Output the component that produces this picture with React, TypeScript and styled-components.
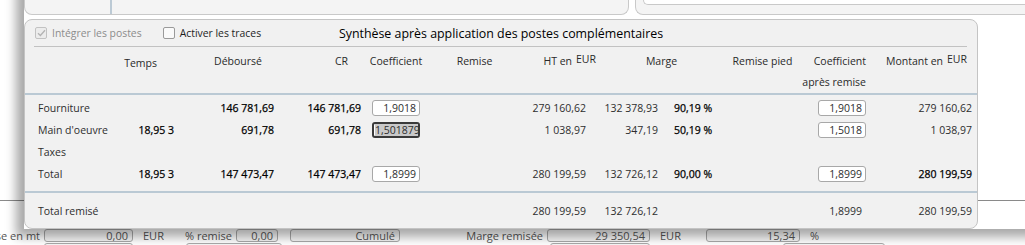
import React from "react";
import styled, { createGlobalStyle } from "styled-components";

const GlobalStyle = createGlobalStyle`
  html, body { margin: 0; padding: 0; background: #ffffff; }
  body {
    font-family: "Open Sans", "Noto Sans", sans-serif;
    color: #1e1e1e;
  }
`;

const COLS = "79px 72px 100px 87px 66px 91px 78px 62px 65px 75px 70px 1fr";

const Page = styled.div`
  position: relative;
  width: 1025px;
  height: 245px;
  overflow: hidden;
  background: #ffffff;
`;

/* ---------- background page ---------- */

const TopRow = styled.div`
  display: flex;
  gap: 6px;
  height: 15px;
  padding-left: 24px;
`;

const LeftCard = styled.div`
  width: 518px;
  display: flex;
  background: #f4f4f4;
  border: 1px solid #c9c9c9;
  border-top: none;
  border-radius: 0 0 8px 8px;
  padding-left: 85px;
`;

const CardDivider = styled.div`
  width: 2px;
  background: #bccad5;
`;

const RightCard = styled.div`
  flex: 1;
  background: #f4f4f4;
  border: 1px solid #c9c9c9;
  border-top: none;
  border-right: none;
  border-radius: 0 0 0 8px;
  padding-left: 7px;
`;

const RightCardField = styled.div`
  height: 4px;
  background: #ffffff;
  border: 1px solid #c9c9c9;
  border-top: none;
  border-right: none;
  border-radius: 0 0 0 6px;
`;

const Middle = styled.div`
  height: 185px;
  border-bottom: 1px solid #8a8a8a;
`;

const FormArea = styled.div`
  display: flex;
  flex-direction: column;
  gap: 1px;
  padding-top: 28px;
  font-size: 11px;
  color: #555;
`;

const FormRow = styled.div`
  display: flex;
  align-items: center;
  height: 13px;
`;

const FormLabel = styled.span<{ $w: number }>`
  width: ${(p) => p.$w}px;
  display: flex;
  justify-content: flex-end;
  padding-right: 4px;
  box-sizing: border-box;
  white-space: nowrap;
`;

const FormText = styled.span<{ $w: number }>`
  width: ${(p) => p.$w}px;
  padding-left: 10px;
  box-sizing: border-box;
  white-space: nowrap;
`;

const FormInput = styled.div<{ $w: number; $ml?: number }>`
  width: ${(p) => p.$w}px;
  margin-left: ${(p) => p.$ml ?? 0}px;
  height: 13px;
  box-sizing: border-box;
  border: 1px solid #aaaaaa;
  border-radius: 3px;
  background: #f7f7f7;
  text-align: right;
  padding-right: 4px;
  line-height: 11px;
`;

/* ---------- popup ---------- */

const Overlay = styled.div`
  position: absolute;
  left: 24px;
  top: -20px;
  right: -20px;
  height: 249px;
  padding-top: 39px;
  box-sizing: border-box;
  box-shadow: -8px 8px 10px rgba(0, 0, 0, 0.34);
`;

const Popup = styled.div`
  width: 954px;
  height: 210px;
  box-sizing: border-box;
  background: #f1f1f1;
  border: 1px solid #c4c4c4;
  border-radius: 8px;
  display: flex;
  flex-direction: column;
  font-size: 10.5px;
`;

const TopBar = styled.div`
  display: grid;
  grid-template-columns: 1fr auto 1fr;
  align-items: center;
  height: 26px;
  padding: 0 10px;
`;

const Checks = styled.div`
  display: flex;
  align-items: center;
  font-size: 10.4px;
`;

const CheckItem = styled.label<{ $disabled?: boolean }>`
  display: flex;
  align-items: center;
  gap: 5px;
  margin-right: 21px;
  color: ${(p) => (p.$disabled ? "#8c8c8c" : "#1e1e1e")};
`;

const Box = styled.span<{ $disabled?: boolean }>`
  width: 12px;
  height: 12px;
  box-sizing: border-box;
  border: 1px solid ${(p) => (p.$disabled ? "#c2c2c2" : "#9a9a9a")};
  border-radius: 2px;
  background: ${(p) => (p.$disabled ? "#ececec" : "#fafafa")};
  display: flex;
  align-items: center;
  justify-content: center;
`;

const Title = styled.div`
  font-size: 12.4px;
  color: #000;
  white-space: nowrap;
`;

const Separator = styled.div`
  height: 1px;
  margin: 0 10px 0 9px;
  background: #c2c2c2;
`;

const ThickLine = styled.div`
  height: 2px;
  background: #bac9d4;
`;

const HeadGrid = styled.div`
  display: grid;
  grid-template-columns: ${COLS};
  height: 46px;
  padding-top: 4px;
  box-sizing: border-box;
  line-height: 21px;
  color: #2a2a2a;
`;

const HeadCell = styled.div<{
  $col: number;
  $span?: number;
  $align: "left" | "center" | "right";
  $pr?: number;
  $drop?: number;
}>`
  grid-column: ${(p) => p.$col} / span ${(p) => p.$span ?? 1};
  grid-row: 1;
  text-align: ${(p) => p.$align};
  padding-right: ${(p) => p.$pr ?? 0}px;
  padding-top: ${(p) => p.$drop ?? 0}px;
  white-space: nowrap;
`;

const Cur = styled.span`
  position: relative;
  top: -2px;
  margin-left: 4px;
`;

const Body = styled.div<{ $pt: number; $pb: number }>`
  padding-top: ${(p) => p.$pt}px;
  padding-bottom: ${(p) => p.$pb}px;
`;

const Row = styled.div`
  display: grid;
  grid-template-columns: ${COLS};
  height: 22px;
  align-items: center;
`;

const Cell = styled.div<{
  $align?: "left" | "center" | "right";
  $pr?: number;
  $pl?: number;
  $strong?: boolean;
}>`
  display: flex;
  justify-content: ${(p) =>
    p.$align === "left" ? "flex-start" : p.$align === "center" ? "center" : "flex-end"};
  padding-right: ${(p) => p.$pr ?? 0}px;
  padding-left: ${(p) => p.$pl ?? 0}px;
  white-space: nowrap;
  color: ${(p) => (p.$strong ? "#000" : "#2e2e2e")};
  -webkit-text-stroke: ${(p) => (p.$strong ? "0.25px #000" : "0")};
`;

const CoefBox = styled.div<{ $focused?: boolean }>`
  width: 48px;
  height: 16px;
  box-sizing: border-box;
  border: ${(p) => (p.$focused ? "2px solid #3a3a3a" : "1px solid #a8a8a8")};
  border-radius: 3px;
  background: #ffffff;
  display: flex;
  align-items: center;
  justify-content: ${(p) => (p.$focused ? "flex-start" : "flex-end")};
  padding: 0 3px 0 1px;
  overflow: hidden;
  color: #2e2e2e;
  -webkit-text-stroke: 0;
`;

const Selected = styled.span`
  background: #c9c9c9;
  line-height: 12px;
`;

type Line = {
  label: string;
  temps?: string;
  deb?: string;
  cr?: string;
  coef?: string;
  focused?: boolean;
  ht?: string;
  marge?: string;
  pct?: string;
  coefA?: string;
  montant?: string;
  total?: boolean;
};

const lines: Line[] = [
  {
    label: "Fourniture",
    deb: "146 781,69",
    cr: "146 781,69",
    coef: "1,9018",
    ht: "279 160,62",
    marge: "132 378,93",
    pct: "90,19 %",
    coefA: "1,9018",
    montant: "279 160,62",
  },
  {
    label: "Main d'oeuvre",
    temps: "18,95 3",
    deb: "691,78",
    cr: "691,78",
    coef: "1,501879",
    focused: true,
    ht: "1 038,97",
    marge: "347,19",
    pct: "50,19 %",
    coefA: "1,5018",
    montant: "1 038,97",
  },
  { label: "Taxes" },
  {
    label: "Total",
    temps: "18,95 3",
    deb: "147 473,47",
    cr: "147 473,47",
    coef: "1,8999",
    ht: "280 199,59",
    marge: "132 726,12",
    pct: "90,00 %",
    coefA: "1,8999",
    montant: "280 199,59",
    total: true,
  },
];

const Check: React.FC<{ checked?: boolean; disabled?: boolean }> = ({ checked, disabled }) => (
  <Box $disabled={disabled}>
    {checked && (
      <svg width="9" height="8" viewBox="0 0 9 8">
        <path d="M1 4.2 L3.4 6.5 L8 1.2" fill="none" stroke={disabled ? "#b3b3b3" : "#333"} strokeWidth="1.3" />
      </svg>
    )}
  </Box>
);

export default function App() {
  return (
    <Page>
      <GlobalStyle />
      <TopRow>
        <LeftCard>
          <CardDivider />
        </LeftCard>
        <RightCard>
          <RightCardField />
        </RightCard>
      </TopRow>
      <Middle />
      <FormArea>
        <FormRow>
          <FormLabel $w={44}>Remise en mt</FormLabel>
          <FormInput $w={89}>0,00</FormInput>
          <FormText $w={53}>EUR</FormText>
          <FormLabel $w={50}>% remise</FormLabel>
          <FormInput $w={42}>0,00</FormInput>
          <FormInput $w={110} $ml={12}>Cumulé</FormInput>
          <FormLabel $w={147}>Marge remisée</FormLabel>
          <FormInput $w={103}>29 350,54</FormInput>
          <FormText $w={56}>EUR</FormText>
          <FormInput $w={94}>15,34</FormInput>
          <FormText $w={20}>%</FormText>
        </FormRow>
        <FormRow>
          <FormInput $w={89} $ml={44} />
          <FormInput $w={96} $ml={53} />
          <FormInput $w={100} $ml={268} />
          <FormInput $w={102} $ml={133} />
        </FormRow>
      </FormArea>

      <Overlay>
        <Popup>
          <TopBar>
            <Checks>
              <CheckItem $disabled>
                <Check checked disabled />
                Intégrer les postes
              </CheckItem>
              <CheckItem>
                <Check />
                Activer les traces
              </CheckItem>
            </Checks>
            <Title>Synthèse après application des postes complémentaires</Title>
            <div />
          </TopBar>
          <Separator />
          <HeadGrid>
            <HeadCell $col={2} $align="right" $pr={19} $drop={2}>Temps</HeadCell>
            <HeadCell $col={3} $align="right" $pr={14}>Déboursé</HeadCell>
            <HeadCell $col={4} $align="right" $pr={15}>CR</HeadCell>
            <HeadCell $col={5} $align="center">Coefficient</HeadCell>
            <HeadCell $col={6} $align="center">Remise</HeadCell>
            <HeadCell $col={7} $align="right" $pr={2}>
              HT en<Cur>EUR</Cur>
            </HeadCell>
            <HeadCell $col={8} $span={2} $align="center">Marge</HeadCell>
            <HeadCell $col={10} $align="center">Remise pied</HeadCell>
            <HeadCell $col={11} $align="right" $pr={4}>
              Coefficient
              <br />
              après remise
            </HeadCell>
            <HeadCell $col={12} $align="right" $pr={10}>
              Montant en<Cur>EUR</Cur>
            </HeadCell>
          </HeadGrid>
          <ThickLine />
          <Body $pt={2} $pb={6}>
            {lines.map((l) => (
              <Row key={l.label}>
                <Cell $align="left" $pl={13}>{l.label}</Cell>
                <Cell $pr={2} $strong>{l.temps}</Cell>
                <Cell $pr={2} $strong>{l.deb}</Cell>
                <Cell $pr={2} $strong>{l.cr}</Cell>
                <Cell $align="center">
                  {l.coef && (
                    <CoefBox $focused={l.focused}>
                      {l.focused ? <Selected>{l.coef}</Selected> : l.coef}
                    </CoefBox>
                  )}
                </Cell>
                <Cell />
                <Cell $pr={12}>{l.ht}</Cell>
                <Cell $pr={2}>{l.marge}</Cell>
                <Cell $align="left" $pl={14} $strong>{l.pct}</Cell>
                <Cell />
                <Cell $pr={4}>{l.coefA && <CoefBox>{l.coefA}</CoefBox>}</Cell>
                <Cell $pr={5} $strong={l.total}>{l.montant}</Cell>
              </Row>
            ))}
          </Body>
          <ThickLine />
          <Body $pt={7} $pb={0}>
            <Row>
              <Cell $align="left" $pl={13}>Total remisé</Cell>
              <Cell />
              <Cell />
              <Cell />
              <Cell />
              <Cell />
              <Cell $pr={12}>280 199,59</Cell>
              <Cell $pr={2}>132 726,12</Cell>
              <Cell />
              <Cell />
              <Cell $pr={8}>1,8999</Cell>
              <Cell $pr={5}>280 199,59</Cell>
            </Row>
          </Body>
        </Popup>
      </Overlay>
    </Page>
  );
}
